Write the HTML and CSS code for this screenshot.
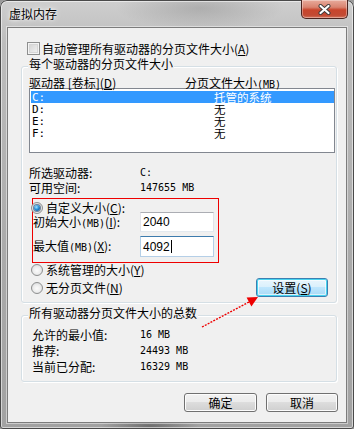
FILE: index.html
```html
<!DOCTYPE html>
<html lang="zh-CN">
<head>
<meta charset="utf-8">
<title>虚拟内存</title>
<link rel="stylesheet" href="styles.css">
</head>
<body>
<div class="window">
  <div class="titlebar">
    <div class="title">虚拟内存</div>
    <div class="close">
      <svg width="13" height="11" viewBox="0 0 13 11">
        <path d="M2.5 2 L10.5 9 M10.5 2 L2.5 9" stroke="#3a3a3a" stroke-width="4" stroke-linecap="round"/>
        <path d="M2.5 2 L10.5 9 M10.5 2 L2.5 9" stroke="#ffffff" stroke-width="2.2" stroke-linecap="round"/>
      </svg>
    </div>
  </div>
  <div class="client">
    <div class="check-row">
      <span class="checkbox"></span>
      <span>自动管理所有驱动器的分页文件大小(<u>A</u>)</span>
    </div>

    <div class="group group-drives">
      <div class="legend">每个驱动器的分页文件大小</div>
      <div class="header">
        <span class="hcol1">驱动器 [卷标](<u>D</u>)</span>
        <span>分页文件大小<span class="mono">(MB)</span></span>
      </div>
      <div class="listbox">
        <div class="lrow sel"><span class="lcol1 mono">C:</span><span>托管的系统</span></div>
        <div class="lrow"><span class="lcol1 mono">D:</span><span>无</span></div>
        <div class="lrow"><span class="lcol1 mono">E:</span><span>无</span></div>
        <div class="lrow"><span class="lcol1 mono">F:</span><span>无</span></div>
      </div>
      <div class="info">
        <div class="irow"><span class="ilabel">所选驱动器:</span><span class="mono">C:</span></div>
        <div class="irow"><span class="ilabel">可用空间:</span><span class="mono">147655 MB</span></div>
      </div>
      <div class="custom">
        <div class="radio-row first">
          <span class="radio on"></span>
          <span>自定义大小(<u>C</u>):</span>
        </div>
        <div class="field-row">
          <span class="flabel">初始大小<span class="mono">(MB)</span>(<u>I</u>):</span>
          <div class="field">2040</div>
        </div>
        <div class="field-row second">
          <span class="flabel">最大值<span class="mono">(MB)</span>(<u>X</u>):</span>
          <div class="field focus">4092<span class="caret"></span></div>
        </div>
      </div>
      <div class="radio-row sys">
        <span class="radio"></span>
        <span>系统管理的大小(<u>Y</u>)</span>
      </div>
      <div class="last-row">
        <div class="radio-row">
          <span class="radio"></span>
          <span>无分页文件(<u>N</u>)</span>
        </div>
        <div class="btn default set">设置(<u>S</u>)</div>
      </div>
    </div>

    <div class="group group-total">
      <div class="legend">所有驱动器分页文件大小的总数</div>
      <div class="totals">
        <div class="trow"><span class="tlabel">允许的最小值:</span><span class="mono">16 MB</span></div>
        <div class="trow"><span class="tlabel">推荐:</span><span class="mono">24493 MB</span></div>
        <div class="trow"><span class="tlabel">当前已分配:</span><span class="mono">16329 MB</span></div>
      </div>
    </div>

    <div class="buttons">
      <div class="btn ok">确定</div>
      <div class="btn cancel">取消</div>
    </div>
  </div>

  <svg class="arrow" width="354" height="429" viewBox="0 0 354 429">
    <path d="M202 327 L249 302" stroke="#ee0000" stroke-width="1.4" stroke-dasharray="2 1.2" fill="none"/>
    <polygon points="258,297 246.6,297.6 251.4,306.4" fill="#ee0000"/>
  </svg>
</div>
</body>
</html>
```

FILE: styles.css
```css
* {
  box-sizing: border-box;
}

body {
  margin: 0;
  font-family: "Noto Sans CJK SC", "Noto Sans", sans-serif;
  font-size: 12px;
  color: #000;
  background: #9a9a9a;
}

u {
  text-decoration: underline;
  text-underline-offset: 1px;
}

.mono {
  font-family: "DejaVu Sans Mono", "Liberation Mono", monospace;
  font-size: 10px;
}

.window {
  position: relative;
  width: 354px;
  height: 429px;
  display: flex;
  flex-direction: column;
  border-radius: 7px 7px 3px 3px;
  background:
    radial-gradient(ellipse 120px 30px at 200px 8px, rgba(120,120,120,0.35), rgba(120,120,120,0) 70%),
    radial-gradient(ellipse 70px 14px at 150px 426px, rgba(60,60,60,0.5), rgba(60,60,60,0) 70%),
    linear-gradient(to bottom, #cfcfcf 0%, #bdbdbd 10%, #aaaaaa 60%, #a2a2a2 100%);
  box-shadow: inset 0 0 0 1px #4a4a4a, inset 0 0 0 2px rgba(255,255,255,0.55);
}

.titlebar {
  height: 27px;
  display: flex;
  justify-content: space-between;
  align-items: flex-start;
}

.title {
  padding: 7px 0 0 9px;
  font-size: 12px;
  line-height: 14px;
  text-shadow: 0 0 6px rgba(255,255,255,0.95), 0 0 3px rgba(255,255,255,0.9);
}

.close {
  width: 47px;
  height: 19px;
  margin-right: 6px;
  display: flex;
  align-items: center;
  justify-content: center;
  border: 1px solid #4b2520;
  border-top: none;
  border-radius: 0 0 5px 5px;
  background: linear-gradient(to bottom, #e8ab9c 0%, #d98470 40%, #c8452c 55%, #c24a33 85%, #d5775f 100%);
  box-shadow: inset 0 0 0 1px rgba(255,255,255,0.35);
}

.client {
  margin: 0 7px 6px 7px;
  height: 396px;
  border: 1px solid #7c7c7c;
  background: #f0f0f0;
  padding-top: 14px;
  box-shadow: 0 0 0 1px rgba(255,255,255,0.45);
}

.check-row {
  display: flex;
  align-items: center;
  height: 13px;
  line-height: 13px;
  margin-left: 19px;
  gap: 2px;
}

.checkbox {
  width: 13px;
  height: 13px;
  border: 1px solid #8e8f8f;
  background: #fff;
  box-shadow: inset 0 0 0 1px #f4f4f4, inset 0 0 0 2px #d6d6d6;
  background-image: linear-gradient(135deg, #d0d0d0, #f6f6f6);
}

.group {
  margin: 11px 9px 0 13px;
  border: 1px solid #d5dfe5;
  border-radius: 3px;
  box-shadow: inset 1px 1px 0 #ffffff, 1px 1px 0 #ffffff;
}

.group-drives {
  height: 237px;
}

.group-total {
  height: 67px;
  margin-top: 12px;
}

.legend {
  width: max-content;
  margin: -9px 0 0 6px;
  padding: 0 1px;
  height: 12px;
  line-height: 12px;
  background: #f0f0f0;
}

.header {
  display: flex;
  margin-top: 7px;
  padding-left: 7px;
  height: 11px;
  line-height: 11px;
}

.hcol1 {
  width: 156px;
}

.listbox {
  margin-left: 7px;
  width: 306px;
  height: 65px;
  border: 1px solid #828790;
  background: #fff;
  padding: 2px 0 0 1px;
}

.lrow {
  display: flex;
  align-items: center;
  width: 303px;
  height: 12px;
  line-height: 11px;
  font-size: 11.5px;
  padding-left: 1px;
}

.lrow .mono {
  font-size: 11px;
}

.lrow.sel {
  background: #3399ff;
  color: #fff;
}

.lcol1 {
  width: 182px;
}

.info {
  margin-top: 12px;
  padding-left: 7px;
}

.irow {
  display: flex;
  align-items: center;
  height: 15px;
  line-height: 14px;
}

.ilabel {
  width: 111px;
}

.custom {
  margin: 3px 0 0 10px;
  width: 187px;
  height: 65px;
  border: 1px solid #ee0000;
  padding-top: 3px;
}

.radio-row {
  display: flex;
  align-items: center;
  gap: 3px;
  height: 13px;
  line-height: 13px;
}

.radio-row.first {
  margin-left: -2px;
  height: 12px;
  line-height: 12px;
  margin-bottom: -2px;
}

.radio-row.sys {
  margin-left: 9px;
}

.radio {
  width: 12px;
  height: 12px;
  border-radius: 50%;
  border: 1px solid #8e8f8f;
  background: radial-gradient(circle at 50% 55%, #fbfbfb 0%, #eeeeee 45%, #cfd1d4 100%);
  display: flex;
  align-items: center;
  justify-content: center;
}

.radio.on::after {
  content: "";
  width: 6px;
  height: 6px;
  border-radius: 50%;
  background: radial-gradient(circle at 40% 35%, #9fe4ff 0%, #2a8fd6 45%, #0d3d73 100%);
  box-shadow: 0 0 0 1px rgba(30,60,100,0.6);
}

.field-row {
  display: flex;
  align-items: center;
  height: 20px;
}

.field-row.second {
  margin-top: 4px;
  height: 21px;
}

.flabel {
  width: 107px;
  line-height: 13px;
}

.field {
  width: 74px;
  height: 100%;
  background: #fff;
  border: 1px solid #e2e3ea;
  border-top-color: #abadb3;
  border-bottom-color: #e3e9ef;
  padding-left: 2px;
  font-family: "Liberation Sans", Arial, sans-serif;
  font-size: 12px;
  display: flex;
  align-items: center;
}

.field.focus {
  border-color: #b5cfe7;
  border-top-color: #3d7bad;
}

.caret {
  display: inline-block;
  width: 1px;
  height: 13px;
  margin-left: 1px;
  background: #000;
}

.last-row {
  display: flex;
  justify-content: space-between;
  align-items: center;
  margin: 2px 8px 0 9px;
  height: 19px;
}

.btn {
  display: flex;
  align-items: center;
  justify-content: center;
  height: 19px;
  border: 1px solid #707070;
  border-radius: 3px;
  background: linear-gradient(to bottom, #f2f2f2 0%, #ebebeb 49%, #dddddd 50%, #cfcfcf 100%);
  box-shadow: inset 0 0 0 1px #fcfcfc;
  line-height: 14px;
}

.btn.default {
  border-color: #3c7fb1;
  background: linear-gradient(to bottom, #eaf6fd 0%, #d9f0fc 49%, #bee6fd 50%, #a7d9f5 100%);
  box-shadow: inset 0 0 0 1px #48d4f0, inset 0 0 0 2px rgba(255,255,255,0.6);
}

.set {
  width: 72px;
}

.totals {
  margin-top: 8px;
  padding-left: 10px;
}

.trow {
  display: flex;
  align-items: center;
  height: 16px;
  line-height: 14px;
}

.tlabel {
  width: 108px;
}

.buttons {
  display: flex;
  justify-content: flex-end;
  gap: 9px;
  margin-top: 11px;
  padding-right: 8px;
}

.ok {
  width: 73px;
}

.cancel {
  width: 72px;
}

.arrow {
  position: absolute;
  left: 0;
  top: 0;
  pointer-events: none;
}
```
